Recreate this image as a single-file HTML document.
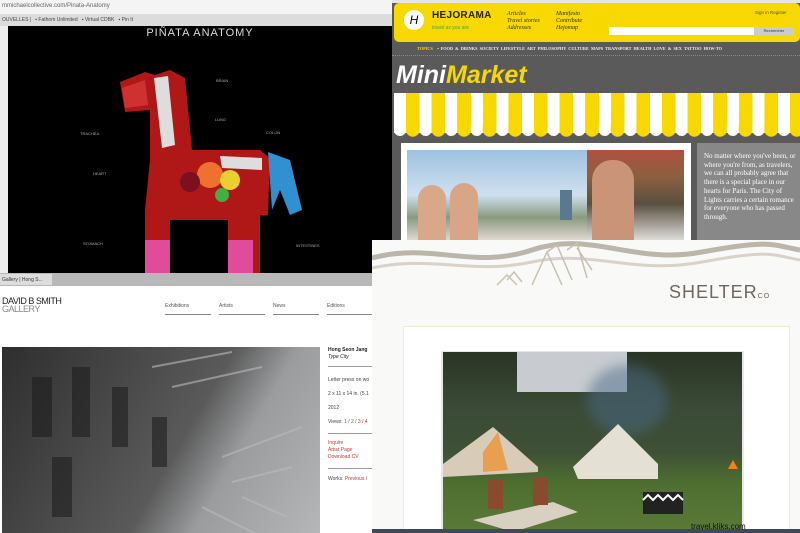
<!DOCTYPE html>
<html><head><meta charset="utf-8"><style>
*{margin:0;padding:0;box-sizing:border-box}
body{width:800px;height:533px;overflow:hidden;position:relative;background:#fff;font-family:"Liberation Sans",sans-serif}
.a{position:absolute}
</style></head><body>
<!-- top-left pinata -->
<div class="a" style="left:0;top:0;width:395px;height:275px;background:#000">
 <div class="a" style="left:0;top:0;width:395px;height:14px;background:#f4f4f4;font-size:6px;color:#666;padding:3px 2px">mmichaelcollective.com/Pinata-Anatomy</div>
 <div class="a" style="left:0;top:14px;width:395px;height:12px;background:#dcdcdc;font-size:5px;color:#444;padding:3px 2px;white-space:nowrap">OUVELLES | &nbsp; ▪ Fathom Unlimited &nbsp; ▪ Virtual CDBK &nbsp; ▪ Pin It</div>
 <div class="a" style="left:0;top:26px;width:8px;height:249px;background:#eee"></div>
 <div class="a" style="left:120px;top:27px;width:160px;text-align:center;color:#ddd;font-size:11px;letter-spacing:1px;white-space:nowrap">PIÑATA ANATOMY</div>
 <svg class="a" style="left:110px;top:70px" width="210" height="205">
  <path d="M10 12 L35 2 L45 5 L60 0 L75 8 L82 80 L150 80 L160 88 L158 145 L150 145 L150 203 L118 203 L118 150 L60 150 L60 203 L35 203 L35 140 L40 90 L40 40 L15 42 Z" fill="#b01818"/>
  <path d="M12 18 L35 10 L38 35 L15 38 Z" fill="#d03030"/>
  <path d="M44 8 L58 6 L65 75 L52 78 Z" fill="#ddd"/>
  <path d="M110 86 L152 88 L152 100 L112 98 Z" fill="#ddd"/>
  <circle cx="100" cy="105" r="13" fill="#f07030"/>
  <circle cx="80" cy="112" r="10" fill="#7a1020"/>
  <circle cx="120" cy="110" r="10" fill="#e8d030"/>
  <circle cx="112" cy="125" r="7" fill="#40b040"/>
  <path d="M158 82 L180 90 L192 140 L180 145 L170 120 L162 140 Z" fill="#3090d0"/>
  <rect x="35" y="170" width="25" height="33" fill="#e04c9a"/>
  <rect x="118" y="170" width="25" height="33" fill="#e04c9a"/>
 </svg>
 <div class="a" style="left:80px;top:131px;font-size:4px;color:#aaa">TRACHEA</div>
 <div class="a" style="left:93px;top:171px;font-size:4px;color:#aaa">HEART</div>
 <div class="a" style="left:83px;top:241px;font-size:4px;color:#aaa">STOMACH</div>
 <div class="a" style="left:216px;top:78px;font-size:4px;color:#aaa">BRAIN</div>
 <div class="a" style="left:215px;top:117px;font-size:4px;color:#aaa">LUNG</div>
 <div class="a" style="left:266px;top:130px;font-size:4px;color:#aaa">COLON</div>
 <div class="a" style="left:296px;top:243px;font-size:4px;color:#aaa">INTESTINES</div>
</div>
<!-- bottom-left gallery -->
<div class="a" style="left:0;top:273px;width:372px;height:260px;background:#fff">
 <div class="a" style="left:0;top:0;width:372px;height:13px;background:#b8b8b8"></div>
 <div class="a" style="left:0;top:1px;width:52px;height:11px;background:#ddd;font-size:5px;color:#333;padding:3px 2px;white-space:nowrap;overflow:hidden">Gallery | Hong S...</div>
 <div class="a" style="left:2px;top:24px;font-size:9px;line-height:8px;color:#222;letter-spacing:-.5px">DAVID B SMITH<br><span style="color:#888;font-weight:normal">GALLERY</span></div>
 <div class="a" style="left:165px;top:30px;width:210px;font-size:5px;color:#555">
  <span class="a" style="left:0;width:46px;border-bottom:1.5px solid #888;padding-bottom:5px">Exhibitions</span>
  <span class="a" style="left:54px;width:46px;border-bottom:1.5px solid #888;padding-bottom:5px">Artists</span>
  <span class="a" style="left:108px;width:46px;border-bottom:1.5px solid #888;padding-bottom:5px">News</span>
  <span class="a" style="left:162px;width:46px;border-bottom:1.5px solid #888;padding-bottom:5px">Editions</span>
 </div>
 <div class="a" style="left:2px;top:74px;width:318px;height:186px;background:linear-gradient(120deg,#2e2e2e 0%,#4a4a4a 35%,#5a5a5a 55%,#9a9c9e 70%,#b4b6b8 100%)"></div>
 <svg class="a" style="left:2px;top:74px" width="318" height="186"><g stroke="#bbb" stroke-width="2" opacity=".6"><path d="M150 20 L230 5 M170 40 L260 20 M220 110 L300 80 M230 135 L290 120 M240 150 L285 170 M200 160 L280 200"/></g><g fill="#1e1e1e" opacity=".6"><rect x="30" y="30" width="20" height="60"/><rect x="70" y="20" width="18" height="70"/><rect x="110" y="40" width="16" height="60"/><rect x="150" y="70" width="15" height="50"/><rect x="50" y="110" width="20" height="60"/></g></svg>
 <div class="a" style="left:328px;top:74px;font-size:5px;line-height:7px;color:#222;white-space:nowrap"><b>Hong Seon Jang</b><br><i>Type City</i></div>
 <div class="a" style="left:328px;top:93px;width:44px;border-top:1px solid #999"></div>
 <div class="a" style="left:328px;top:100px;font-size:5px;color:#444;line-height:14px;white-space:nowrap">Letter press on wo<br>2 x 11 x 14 in. (5.1<br>2012<br>Views: <span style="color:#c33">1 / 2 / 3 / 4</span></div>
 <div class="a" style="left:328px;top:160px;width:44px;border-top:1px solid #999"></div>
 <div class="a" style="left:328px;top:167px;font-size:5px;color:#c33;line-height:7px">Inquire<br>Artist Page<br>Download CV</div>
 <div class="a" style="left:328px;top:195px;width:44px;border-top:1px solid #999"></div>
 <div class="a" style="left:328px;top:203px;font-size:5px;color:#444;white-space:nowrap">Works: <span style="color:#c33">Previous /</span></div>
</div>
<!-- top-right hejorama -->
<div class="a" style="left:392px;top:0;width:408px;height:240px;background:#5a5a5a">
 <div class="a" style="left:0;top:0;width:408px;height:3px;background:#e6e6e6"></div>
 <div class="a" style="left:2px;top:3px;width:406px;height:39px;background:#f7d800;border-radius:5px"></div>
 <div class="a" style="left:12px;top:10px;width:20px;height:20px;border-radius:50%;background:#fff;text-align:center;font-size:12px;line-height:20px;font-style:italic">H</div>
 <div class="a" style="left:40px;top:10px;font-size:10px;font-weight:bold;color:#222;letter-spacing:.3px">HEJORAMA</div>
 <div class="a" style="left:40px;top:25px;font-size:5px;color:#4a4;font-style:italic">travel as you are</div>
 <div class="a" style="left:115px;top:11px;font-family:'Liberation Serif',serif;font-style:italic;font-size:6px;line-height:7px;color:#333">Articles<br>Travel stories<br>Addresses</div>
 <div class="a" style="left:164px;top:11px;font-family:'Liberation Serif',serif;font-style:italic;font-size:6px;line-height:7px;color:#333">Manifesto<br>Contribute<br>Hejomap</div>
 <div class="a" style="left:363px;top:10px;font-size:4.5px;color:#555">Sign in Register</div>
 <div class="a" style="left:217px;top:27px;width:185px;height:8px;background:#fff"></div>
 <div class="a" style="left:362px;top:27px;width:40px;height:8px;background:#ccc;font-size:4px;text-align:center;line-height:8px;color:#333">Rechercher</div>
 <div class="a" style="left:25px;top:46px;font-family:'Liberation Serif',serif;font-weight:bold;font-size:4.3px;color:#eee;white-space:nowrap;word-spacing:1px"><span style="color:#f7d800">TOPICS</span> &nbsp;▪ FOOD &amp; DRINKS SOCIETY LIFESTYLE ART PHILOSOPHY CULTURE MAPS TRANSPORT HEALTH LOVE &amp; SEX TATTOO HOW-TO</div>
 <div class="a" style="left:0;top:55px;width:408px;border-top:1px dotted #888"></div>
 <div class="a" style="left:4px;top:60px;font-size:25px;font-style:italic;font-weight:bold;color:#fff;line-height:30px">Mini<span style="color:#f7d800">Market</span></div>
 <div class="a" style="left:2px;top:93px;width:406px;height:40px;background:repeating-linear-gradient(90deg,#fff 0 12px,#f7d800 12px 25.6px)"></div>
 <svg class="a" style="left:2px;top:124px" width="406" height="14"><defs><pattern id="s" width="25.6" height="14" patternUnits="userSpaceOnUse"><path d="M0 0 H12 V6 A6 6 0 0 1 0 6 Z" fill="#fff"/><path d="M12 0 H25.6 V6 A6.8 6.8 0 0 1 12 6 Z" fill="#f7d800"/></pattern></defs><rect width="406" height="14" fill="url(#s)"/></svg>
 <div class="a" style="left:9px;top:143px;width:290px;height:97px;background:#fff"></div>
 <div class="a" style="left:15px;top:150px;width:180px;height:90px;background:linear-gradient(#9ec2e0,#cfe0ee 50%,#8a9a80 75%,#e0d8d0)"></div>
 <div class="a" style="left:168px;top:190px;width:12px;height:30px;background:#5a7890"></div>
 <div class="a" style="left:26px;top:185px;width:28px;height:55px;border-radius:14px 14px 0 0;background:#d8a888"></div>
 <div class="a" style="left:58px;top:183px;width:28px;height:57px;border-radius:14px 14px 0 0;background:#d9a587"></div>
 <div class="a" style="left:195px;top:150px;width:97px;height:90px;background:linear-gradient(#b05040,#8a6040 30%,#5a5040 60%,#dcdcd8)"></div>
 <div class="a" style="left:200px;top:160px;width:42px;height:80px;border-radius:20px 20px 0 0;background:#c99478"></div>
 <div class="a" style="left:305px;top:143px;width:103px;height:97px;background:#888"></div>
 <div class="a" style="left:312px;top:152px;width:92px;font-family:'Liberation Serif',serif;font-size:7px;line-height:8.7px;color:#fff">No matter where you've been, or where you're from, as travelers, we can all probably agree that there is a special place in our hearts for Paris. The City of Lights carries a certain romance for everyone who has passed through.</div>
</div>
<!-- bottom-right shelter -->
<div class="a" style="left:372px;top:240px;width:428px;height:293px;background:#f9f9f7">
 <svg class="a" style="left:0;top:0" width="428" height="55"><path d="M0 18 C60 2 100 30 160 10 S260 25 330 12 S400 5 428 10" stroke="#bbb5aa" stroke-width="5" fill="none"/><path d="M0 28 C60 15 100 35 160 22 S260 35 330 22 S400 15 428 20" stroke="#d8d2c8" stroke-width="3" fill="none"/><g stroke="#c8c0b0" stroke-width="1.5" fill="none"><path d="M160 45 L175 12 L190 45 M175 12 L185 5 L200 40 M195 10 L205 3 L215 38 M205 8 L220 30"/><path d="M125 45 L135 35 L145 45 M135 40 L142 32 L150 42"/></g></svg>
 <div class="a" style="left:297px;top:42px;font-size:18px;color:#6f665e;letter-spacing:1px">SHELTER<span style="font-size:7px">CO</span></div>
 <div class="a" style="left:31px;top:86px;width:387px;height:207px;border:1.5px solid #f0eed0;background:#fff"></div>
 <div class="a" style="left:69px;top:111px;width:303px;height:182px;background:#e8e8e8"></div>
 <div class="a" style="left:71px;top:112px;width:299px;height:181px;background:linear-gradient(#2a3424,#3a4a36 30%,#3e5036 55%,#4d6e30 72%,#5a7a38)"></div>
 <div class="a" style="left:145px;top:112px;width:110px;height:40px;background:#c8ccd0"></div>
 <div class="a" style="left:215px;top:125px;width:80px;height:70px;border-radius:50%;background:#4a6a88;opacity:.5;filter:blur(6px)"></div>
 <svg class="a" style="left:71px;top:112px" width="299" height="181"><path d="M0 112 L50 75 L95 115 L95 120 L0 125 Z" fill="#d8ccb8"/><path d="M40 100 L55 80 L65 118 L40 120 Z" fill="#e8a050"/><path d="M130 115 L175 72 L215 112 L215 127 L135 127 Z" fill="#e4e0d4"/><path d="M285 117 L290 108 L295 117 Z" fill="#f08020"/><rect x="200" y="140" width="40" height="22" fill="#222"/><path d="M200 148 l5 -5 5 5 5 -5 5 5 5 -5 5 5 5 -5 5 5" stroke="#fff" stroke-width="2" fill="none"/><path d="M30 168 L110 150 L135 160 L70 180 Z" fill="#d8d0c0"/><rect x="45" y="127" width="15" height="30" fill="#8a4a30"/><rect x="90" y="125" width="15" height="28" fill="#8a4a30"/></svg>
 <div class="a" style="left:319px;top:282px;font-size:8px;color:#111">travel.kliks.com</div>
</div>
<div class="a" style="left:372px;top:529px;width:428px;height:4px;background:#3c4a5a"></div>
</body></html>
